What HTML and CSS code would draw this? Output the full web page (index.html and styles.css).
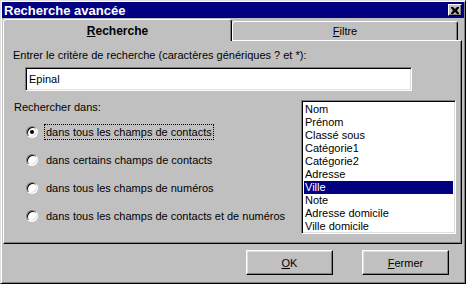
FILE: index.html
```html
<!DOCTYPE html>
<html lang="fr">
<head>
    <meta charset="UTF-8">
    <meta name="viewport" content="width=device-width, initial-scale=1.0">
    <title>Recherche avancée</title>
    <link rel="stylesheet" href="styles.css">
</head>
<body>
    <div class="window">
        <div class="title-bar">
            <span class="title">Recherche avancée</span>
            <span class="close-btn">
                <svg width="8" height="7" viewBox="0 0 8 7">
                    <path d="M0 0h2l2 2 2-2h2v1L6 3.5 8 6v1H6L4 5 2 7H0V6l2-2.5L0 1z" fill="#000"/>
                </svg>
            </span>
        </div>

        <div class="tabs">
            <div class="tab active"><u>R</u>echerche</div>
            <div class="tab"><u>F</u>iltre</div>
        </div>

        <div class="panel">
            <div class="field-label">Entrer le critère de recherche (caractères génériques ? et *):</div>
            <div class="text-input">Epinal</div>

            <div class="search-in">
                <div class="options">
                    <div class="options-title">Rechercher dans:</div>
                    <div class="radio checked">
                        <span class="radio-circle"></span>
                        <span class="radio-text focused">dans tous les champs de contacts</span>
                    </div>
                    <div class="radio">
                        <span class="radio-circle"></span>
                        <span class="radio-text">dans certains champs de contacts</span>
                    </div>
                    <div class="radio">
                        <span class="radio-circle"></span>
                        <span class="radio-text">dans tous les champs de numéros</span>
                    </div>
                    <div class="radio">
                        <span class="radio-circle"></span>
                        <span class="radio-text">dans tous les champs de contacts et de numéros</span>
                    </div>
                </div>

                <ul class="listbox">
                    <li>Nom</li>
                    <li>Prénom</li>
                    <li>Classé sous</li>
                    <li>Catégorie1</li>
                    <li>Catégorie2</li>
                    <li>Adresse</li>
                    <li class="selected">Ville</li>
                    <li>Note</li>
                    <li>Adresse domicile</li>
                    <li>Ville domicile</li>
                </ul>
            </div>
        </div>

        <div class="footer">
            <span class="btn"><u>O</u>K</span>
            <span class="btn"><u>F</u>ermer</span>
        </div>
    </div>
</body>
</html>
```

FILE: styles.css
```css
* {
    box-sizing: border-box;
}

body {
    margin: 0;
    font-family: "Liberation Sans", Arial, sans-serif;
    font-size: 11px;
    color: #000;
    background: #c0c0c0;
}

.window {
    width: 466px;
    height: 284px;
    background: #c0c0c0;
    border: 1px solid;
    border-color: #dfdfdf #000 #000 #dfdfdf;
    box-shadow: inset 1px 1px #fff, inset -1px -1px #808080;
    padding: 1px 1px 0 1px;
    display: flex;
    flex-direction: column;
}

/* barre de titre */
.title-bar {
    height: 16px;
    background: #000080;
    color: #fff;
    display: flex;
    align-items: center;
    justify-content: space-between;
    padding: 0 2px 0 2px;
}

.title {
    font-weight: bold;
    font-size: 13px;
}

.close-btn {
    width: 14px;
    height: 12px;
    background: #c0c0c0;
    border: 1px solid;
    border-color: #fff #000 #000 #fff;
    box-shadow: inset -1px -1px #808080;
    display: flex;
    align-items: center;
    justify-content: center;
}

/* onglets */
.tabs {
    display: flex;
    align-items: flex-end;
    height: 21px;
    margin-top: 1px;
    padding-left: 1px;
}

.tab {
    height: 19px;
    width: 226px;
    margin-left: 1px;
    display: flex;
    align-items: center;
    justify-content: center;
    border: 1px solid;
    border-bottom: none;
    border-color: #fff #000 #000 #fff;
    border-radius: 3px 3px 0 0;
    box-shadow: inset -1px 0 #808080;
}

.tab.active {
    height: 22px;
    width: 229px;
    margin-left: 0;
    margin-bottom: -1px;
    font-weight: bold;
    font-size: 12px;
    background: #c0c0c0;
    position: relative;
    z-index: 1;
}

.tab.active + .tab {
    margin-left: 0;
}

/* panneau */
.panel {
    height: 204px;
    margin: 0 2px 0 1px;
    border: 1px solid;
    border-color: #fff #000 #000 #fff;
    box-shadow: inset -1px -1px #808080;
    padding: 7px 5px 0 9px;
}

.field-label {
    line-height: 14px;
}

.text-input {
    width: 387px;
    height: 24px;
    margin: 5px 0 0 12px;
    background: #fff;
    border: 1px solid;
    border-color: #808080 #fff #fff #808080;
    box-shadow: inset 1px 1px #000, inset -1px -1px #dfdfdf;
    padding: 0 3px;
    display: flex;
    align-items: center;
}

.search-in {
    display: flex;
    margin-top: 9px;
}

.options {
    flex: 1;
    padding-left: 1px;
}

.options-title {
    line-height: 14px;
}

.radio {
    display: flex;
    align-items: center;
    height: 18px;
    padding-left: 12px;
}

.radio + .radio {
    margin-top: 10px;
}

.options-title + .radio {
    margin-top: 9px;
}

.radio-circle {
    width: 12px;
    height: 12px;
    border-radius: 50%;
    background: #fff;
    border: 1px solid;
    border-color: #808080 #fff #fff #808080;
    box-shadow: inset 1px 1px #000, inset -1px -1px #dfdfdf;
    position: relative;
}

.radio.checked .radio-circle::after {
    content: "";
    position: absolute;
    left: 3px;
    top: 3px;
    width: 4px;
    height: 4px;
    border-radius: 50%;
    background: #000;
}

.radio-text {
    margin-left: 6px;
    padding: 1px 1px;
    border: 1px dotted transparent;
}

.radio-text.focused {
    border-color: #000;
}

/* liste des champs */
.listbox {
    list-style: none;
    margin: 0;
    width: 155px;
    height: 134px;
    padding: 2px;
    background: #fff;
    border: 1px solid;
    border-color: #808080 #fff #fff #808080;
    box-shadow: inset 1px 1px #000, inset -1px -1px #dfdfdf;
}

.listbox li {
    height: 13px;
    line-height: 13px;
    padding-left: 1px;
}

.listbox li.selected {
    background: #000080;
    color: #fff;
}

/* boutons */
.footer {
    display: flex;
    justify-content: flex-end;
    gap: 29px;
    padding: 6px 15px 0 0;
}

.btn {
    width: 87px;
    height: 25px;
    display: flex;
    align-items: center;
    justify-content: center;
    border: 1px solid;
    border-color: #fff #000 #000 #fff;
    box-shadow: inset -1px -1px #808080, inset 1px 1px #dfdfdf;
}
```
